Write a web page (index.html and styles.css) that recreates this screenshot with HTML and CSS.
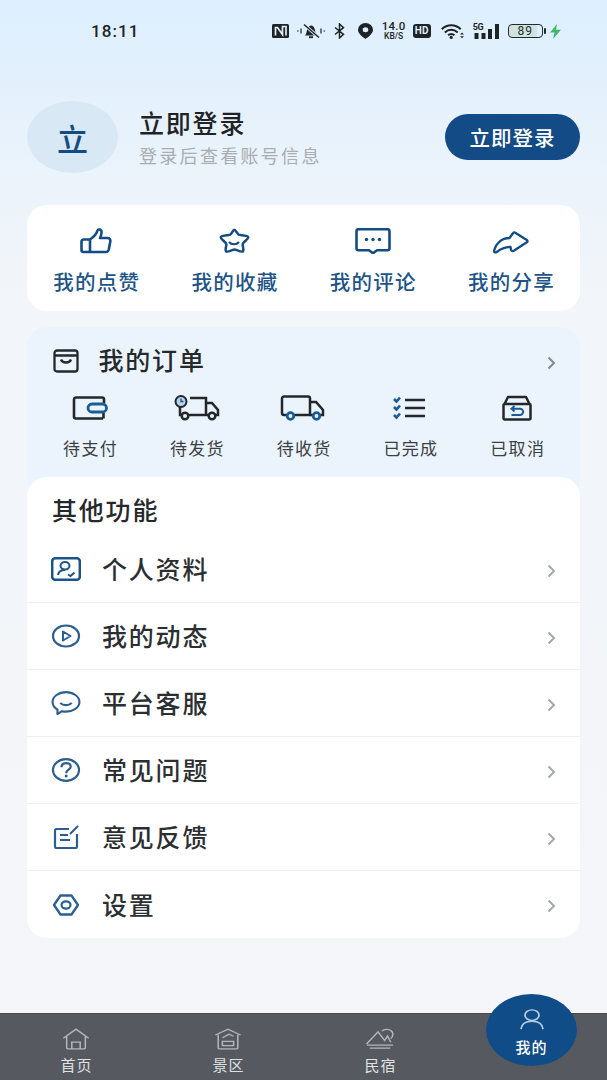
FILE: index.html
```html
<!DOCTYPE html>
<html lang="zh">
<head>
<meta charset="utf-8">
<title>我的</title>
<link rel="stylesheet" href="styles.css">
</head>
<body>
<div class="page">
  <header class="status">
    <span class="time">18:11</span>
    <div class="status-icons">
      <svg class="si nfc" viewBox="0 0 17 14"><rect width="17" height="14" rx="1.5" fill="#1f2326"/><path d="M3.500 11.500V3.500h2l5 7V2.500h3.500v9" fill="none" stroke="#dfeffc" stroke-width="1.700"/></svg>
      <svg class="si bell" viewBox="0 0 28 16"><path d="M8 12.500c1.500-1.500 1.500-3.500 2-5.500s2-4.500 4-4.500 3.500 2 4 4.500 .5 4 2 5.500z" fill="#1f2326"/><path d="M12 14.200h4" stroke="#1f2326" stroke-width="1.800"/><path d="M7 1.500l15 13" stroke="#dfeffc" stroke-width="3"/><path d="M7 1.500l15 13" stroke="#1f2326" stroke-width="1.500"/><path d="M0 8h1.500M4 5.500v5M24 5.500v5M26.500 8H28" stroke="#1f2326" stroke-width="1.200"/></svg>
      <svg class="si bt" viewBox="0 0 11 16"><path d="M1 4.500l8.500 6.800-4 3.700V1l4 3.700L1 11.500" fill="none" stroke="#1f2326" stroke-width="1.500"/></svg>
      <svg class="si pin" viewBox="0 0 15 16"><path fill-rule="evenodd" d="M7.500 0a7.500 6.800 0 0 1 7.500 6.800c0 4-4.500 7-7.500 9.200C4.500 13.800 0 10.800 0 6.800A7.500 6.800 0 0 1 7.500 0zm0 4.200a2.800 2.500 0 1 0 0 5 2.800 2.500 0 0 0 0-5z" fill="#1f2326"/></svg>
      <div class="speed"><span class="speed-num">14.0</span><span class="speed-unit">KB/S</span></div>
      <span class="hd">HD</span>
      <svg class="si wifi" viewBox="0 0 23 15"><path d="M.8 5.200c5.500-5.200 13.400-5.200 18.900 0M3.800 8.400c3.800-3.500 9-3.500 12.900 0M7 11.300c2-1.700 4.500-1.700 6.500 0" fill="none" stroke="#1f2326" stroke-width="2"/><circle cx="10.200" cy="13.400" r="1.600" fill="#1f2326"/><path d="M19 10.500h4l-2-2zM19 12.300h4l-2 2z" fill="#1f2326"/></svg>
      <div class="signal"><span class="five-g">5G</span>
        <svg class="si bars" viewBox="0 0 26 15"><path d="M1.500 9h4v6h-4zM8.500 9h4v6h-4z" fill="#1f2326"/><path d="M15 5h4v10h-4zM22 0h4v15h-4z" fill="#1f2326"/></svg>
      </div>
      <div class="battery"><span class="batt-level">89</span></div>
      <svg class="si bolt" viewBox="0 0 11 15"><path d="M7 0L0 8.500h4.500L3 15l8-9.200H6z" fill="#43b868"/></svg>
    </div>
  </header>

  <section class="profile">
    <div class="avatar">立</div>
    <div class="who">
      <div class="who-name">立即登录</div>
      <div class="who-sub">登录后查看账号信息</div>
    </div>
    <button class="login">立即登录</button>
  </section>

  <section class="card quick">
    <div class="quick-item">
      <svg class="qi" viewBox="0 0 32 26"><path d="M10 11.500v12.500H3.500a2 2 0 0 1-2-2v-8.500a2 2 0 0 1 2-2zM10 11.500c3-2 6.500-5 7.500-9 .4-1.500 3.800-1.500 4 1 .2 2-.5 4.500-1.500 6.500h7.500c2 0 3.200 1.500 2.800 3.500l-1.500 8c-.4 1.600-1.500 2.500-3 2.500H10" fill="none" stroke="#134c82" stroke-width="2.600" stroke-linejoin="round"/></svg>
      <span>我的点赞</span>
    </div>
    <div class="quick-item">
      <svg class="qi" viewBox="0 0 32 26"><path d="M16 1.800c1.800 0 3.200 4 4.700 4.800 1.500.7 8.800.6 9.500 2.500.5 1.700-5 5-5.500 6.700-.5 1.500 1.600 6 .3 7.500-1.500 1.300-6.800-1.800-8.500-1.800s-7 3.100-8.500 1.800c-1.300-1.500.8-6 .3-7.500-.5-1.700-6-5-5.500-6.700.7-1.900 8-1.800 9.500-2.500 1.500-.8 2.900-4.800 3.700-4.800z" fill="none" stroke="#134c82" stroke-width="2.500" stroke-linejoin="round"/><path d="M11 14c2.500 3 7.500 3 10 0" fill="none" stroke="#134c82" stroke-width="2.200"/></svg>
      <span>我的收藏</span>
    </div>
    <div class="quick-item">
      <svg class="qi" viewBox="0 0 36 26"><path d="M3.500 1.200h29a2 2 0 0 1 2 2v17a2 2 0 0 1-2 2H22L18 25.200 14 22.200H3.500a2 2 0 0 1-2-2v-17a2 2 0 0 1 2-2z" fill="none" stroke="#134c82" stroke-width="2.600" stroke-linejoin="round"/><circle cx="11.500" cy="11.500" r="1.700" fill="#134c82"/><circle cx="18" cy="11.500" r="1.700" fill="#134c82"/><circle cx="24.500" cy="11.500" r="1.700" fill="#134c82"/></svg>
      <span>我的评论</span>
    </div>
    <div class="quick-item">
      <svg class="qi" viewBox="0 0 36 26"><path d="M20 5.200c.6-.9 1.500-1 2.300-.5l11.500 7.300c1 .7 1 1.600 0 2.300l-13 8.500c-1.200.7-2.500.2-2.800-1l-.5-3c-5.500.2-9.500 1.800-13.500 5-1.800 1.300-3.500.5-2.800-1.700C3 15.500 8.500 10 16.500 10z" fill="none" stroke="#134c82" stroke-width="2.300" stroke-linejoin="round"/></svg>
      <span>我的分享</span>
    </div>
  </section>

  <section class="orders">
    <div class="orders-head">
      <svg class="bag" viewBox="0 0 26 24"><path d="M4 1.500h18a2.500 2.500 0 0 1 2.500 2.500v16a2.500 2.500 0 0 1-2.500 2.500H4A2.500 2.500 0 0 1 1.500 20V4A2.500 2.500 0 0 1 4 1.500zM1.500 6.500h23M8 10.500c1.500 4 8.500 4 10 0" fill="none" stroke="#26292c" stroke-width="2.300"/></svg>
      <span class="orders-title">我的订单</span>
      <svg class="chev" viewBox="0 0 9 14"><path d="M1.500 1.500L7 7l-5.500 5.500" fill="none" stroke="#83888d" stroke-width="2"/></svg>
    </div>
    <div class="orders-grid">
      <div class="order-item">
        <svg class="oi" viewBox="0 0 36 24"><path d="M31 22.500H4a2 2 0 0 1-2-2V3.500a2 2 0 0 1 2-2h26a2 2 0 0 1 2 2v4" fill="none" stroke="#24272a" stroke-width="2.600"/><path d="M31.500 17v5.500" stroke="#24272a" stroke-width="2.600"/><rect x="16" y="8" width="18.500" height="8" rx="4" fill="none" stroke="#1b5c98" stroke-width="2.800"/></svg>
        <span>待支付</span>
      </div>
      <div class="order-item">
        <svg class="oi wide" viewBox="0 0 46 26"><path d="M16 3h16v17H14M6 12v8h2M32 8h6l6 7v5h-3M32 20h3" fill="none" stroke="#24272a" stroke-width="2.500"/><circle cx="11" cy="21" r="3.300" fill="none" stroke="#24272a" stroke-width="2.500"/><circle cx="38" cy="21" r="3.300" fill="none" stroke="#24272a" stroke-width="2.500"/><circle cx="7" cy="6.500" r="5.500" fill="#b8d2ea" stroke="#24272a" stroke-width="2"/><path d="M7 3.500v3h2.500" fill="none" stroke="#1b5c98" stroke-width="1.400"/></svg>
        <span>待发货</span>
      </div>
      <div class="order-item">
        <svg class="oi wide" viewBox="0 0 46 26"><path d="M7 20H4a2 2 0 0 1-2-2V3.500a2 2 0 0 1 2-2h24a2 2 0 0 1 2 2V20H14" fill="none" stroke="#24272a" stroke-width="2.500"/><path d="M30 7h6l7 8v5h-3M30 20h3" fill="none" stroke="#24272a" stroke-width="2.500"/><circle cx="10.500" cy="21" r="3.300" fill="none" stroke="#1b5c98" stroke-width="2.800"/><circle cx="36.500" cy="21" r="3.300" fill="none" stroke="#1b5c98" stroke-width="2.800"/></svg>
        <span>待收货</span>
      </div>
      <div class="order-item">
        <svg class="oi" viewBox="0 0 36 24"><path d="M2 3l2.500 2.500L8 1.500M2 11l2.500 2.500L8 9.500M2 19l2.500 2.500L8 17.500" fill="none" stroke="#1b5c98" stroke-width="2.600"/><path d="M13 4h20M13 12h20M13 20h20" fill="none" stroke="#24272a" stroke-width="2.500"/></svg>
        <span>已完成</span>
      </div>
      <div class="order-item">
        <svg class="oi narrow" viewBox="0 0 30 26"><path d="M2.500 9L6 2h18l3.500 7M2.500 9h25a1 1 0 0 1 1 1v13a1.500 1.500 0 0 1-1.500 1.500H3A1.500 1.500 0 0 1 1.500 23V10a1 1 0 0 1 1-1z" fill="none" stroke="#24272a" stroke-width="2.500" stroke-linejoin="round"/><path d="M12.500 11l-3 2.700 3 2.700M10 13.700h8a3 3 0 0 1 0 6.300H9.500" fill="none" stroke="#1b5c98" stroke-width="2"/></svg>
        <span>已取消</span>
      </div>
    </div>
  </section>

  <section class="others">
    <h2 class="others-title">其他功能</h2>
    <div class="row">
      <svg class="ri" viewBox="0 0 30 24"><rect x="1.200" y="1.200" width="27.600" height="21.600" rx="3" fill="none" stroke="#1d5486" stroke-width="2.500"/><ellipse cx="14" cy="8.800" rx="4.500" ry="3.700" fill="none" stroke="#1d5486" stroke-width="2"/><path d="M7 18c.5-3.500 3-5 7-5M17 17.500l2.500 1.500 4-3.500" fill="none" stroke="#1d5486" stroke-width="2"/></svg>
      <span class="row-text">个人资料</span>
      <svg class="chev" viewBox="0 0 9 14"><path d="M1.500 1.500L7 7l-5.500 5.500" fill="none" stroke="#a4a8ac" stroke-width="2"/></svg>
    </div>
    <div class="row">
      <svg class="ri" viewBox="0 0 30 24"><ellipse cx="15" cy="12" rx="13" ry="10.500" fill="none" stroke="#2b5f8f" stroke-width="2.200"/><path d="M12 7.500l7.500 4.500-7.500 4.500z" fill="none" stroke="#2b5f8f" stroke-width="2" stroke-linejoin="round"/></svg>
      <span class="row-text">我的动态</span>
      <svg class="chev" viewBox="0 0 9 14"><path d="M1.500 1.500L7 7l-5.500 5.500" fill="none" stroke="#a4a8ac" stroke-width="2"/></svg>
    </div>
    <div class="row">
      <svg class="ri" viewBox="0 0 30 25"><path d="M15 1.200c7.500 0 14 4.500 14 10.300S22.500 21.500 15 21.500c-1.500 0-3-.2-4.200-.5L6 24l.2-4.500C3 17.500 1 14.800 1 11.500 1 5.700 7.500 1.200 15 1.200z" fill="none" stroke="#2b5f8f" stroke-width="2.200" stroke-linejoin="round"/><path d="M9 12.500c3 3 9 3 12 0" fill="none" stroke="#2b5f8f" stroke-width="2.200"/></svg>
      <span class="row-text">平台客服</span>
      <svg class="chev" viewBox="0 0 9 14"><path d="M1.500 1.500L7 7l-5.500 5.500" fill="none" stroke="#a4a8ac" stroke-width="2"/></svg>
    </div>
    <div class="row">
      <svg class="ri" viewBox="0 0 30 24"><ellipse cx="15" cy="12" rx="13" ry="10.800" fill="none" stroke="#2b5f8f" stroke-width="2.200"/><path d="M10.500 9.200c0-2.500 2-4 4.700-4s4.500 1.500 4.500 3.500c0 3-4.500 3-4.500 6.500" fill="none" stroke="#2b5f8f" stroke-width="2.200"/><circle cx="15.200" cy="18" r="1.500" fill="#2b5f8f"/></svg>
      <span class="row-text">常见问题</span>
      <svg class="chev" viewBox="0 0 9 14"><path d="M1.500 1.500L7 7l-5.500 5.500" fill="none" stroke="#a4a8ac" stroke-width="2"/></svg>
    </div>
    <div class="row">
      <svg class="ri" viewBox="0 0 30 24"><path d="M18 4H5.500a1.500 1.500 0 0 0-1.500 1.500v16a1.500 1.500 0 0 0 1.500 1.500h19a1.500 1.500 0 0 0 1.500-1.500V9" fill="none" stroke="#2b5f8f" stroke-width="2.200"/><path d="M9 10h8M9 15h10M19 9l8-8" fill="none" stroke="#2b5f8f" stroke-width="2.100"/></svg>
      <span class="row-text">意见反馈</span>
      <svg class="chev" viewBox="0 0 9 14"><path d="M1.500 1.500L7 7l-5.500 5.500" fill="none" stroke="#a4a8ac" stroke-width="2"/></svg>
    </div>
    <div class="row">
      <svg class="ri" viewBox="0 0 30 24"><path d="M9.500 2.500h11l6.500 9.500-6.500 9.500h-11L3 12z" fill="none" stroke="#2b5f8f" stroke-width="2.300" stroke-linejoin="round"/><ellipse cx="15" cy="12" rx="4.500" ry="3.600" fill="none" stroke="#2b5f8f" stroke-width="2.200"/></svg>
      <span class="row-text">设置</span>
      <svg class="chev" viewBox="0 0 9 14"><path d="M1.500 1.500L7 7l-5.500 5.500" fill="none" stroke="#a4a8ac" stroke-width="2"/></svg>
    </div>
  </section>

  <nav class="tabbar">
    <div class="tab">
      <svg class="ti" viewBox="0 0 30 28" preserveAspectRatio="none"><path d="M1.500 13L15 1.500 28.500 13M5 10.500V25a1.500 1.500 0 0 0 1.500 1.500h17A1.500 1.500 0 0 0 25 25V10.500M10.500 26.500V18h9v8.500" fill="none" stroke="#b4b7ba" stroke-width="1.600"/></svg>
      <span>首页</span>
    </div>
    <div class="tab">
      <svg class="ti" viewBox="0 0 30 28" preserveAspectRatio="none"><path d="M1.500 9L15 1.500 28.500 9M4.500 8.500V25a1.500 1.500 0 0 0 1.500 1.500h18a1.500 1.500 0 0 0 1.500-1.500V8.500M9 17h12v5.500H9zM9 12.500L16 8l5 2.500" fill="none" stroke="#b4b7ba" stroke-width="1.600"/></svg>
      <span>景区</span>
    </div>
    <div class="tab">
      <svg class="ti" viewBox="0 0 30 28" preserveAspectRatio="none"><path d="M.5 20.400L12.900 5 20 16l3-6 3.500 8M17 4c2.500-2.800 7-3 10-.5 2.500 2.500 2.500 7-.5 10M1 21.800h28M4 25.700h22" fill="none" stroke="#b4b7ba" stroke-width="1.600"/></svg>
      <span>民宿</span>
    </div>
    <div class="tab-spacer"></div>
    <div class="tab-active">
      <svg class="ta" viewBox="0 0 24 24" preserveAspectRatio="none"><ellipse cx="12" cy="7" rx="7" ry="6" fill="none" stroke="#b9cfe3" stroke-width="1.700"/><path d="M1 23c.5-6 5-9 11-9s10.500 3 11 9" fill="none" stroke="#b9cfe3" stroke-width="1.700"/></svg>
      <span>我的</span>
    </div>
  </nav>
</div>
</body>
</html>
```

FILE: styles.css
```css
* { box-sizing: border-box; }
html, body { margin: 0; padding: 0; }
body {
  font-family: "Noto Sans CJK SC", "Noto Sans", sans-serif;
  color: #26292c;
}
.page {
  width: 607px;
  height: 1080px;
  overflow: hidden;
  display: flex;
  flex-direction: column;
  position: relative;
  background: linear-gradient(180deg, #ddeffe 0, #e1f0fd 60px, #ebf3fb 170px, #f2f5f9 300px, #f4f6f9 100%);
}

/* status bar */
.status {
  height: 62px;
  display: flex;
  align-items: center;
  padding-left: 91px;
  flex: none;
}
.time {
  font-family: Roboto, sans-serif;
  font-size: 17px;
  font-weight: 500;
  letter-spacing: 1.100px;
  color: #1f2326;
}
.status-icons {
  margin-left: 132px;
  display: flex;
  align-items: center;
  height: 18px;
  color: #1f2326;
}
.si { display: block; flex: none; }
.nfc { width: 17px; height: 14px; margin-right: 8px; }
.bell { width: 28px; height: 16px; margin-right: 9px; }
.bt { width: 11px; height: 16px; margin-right: 13px; }
.pin { width: 15px; height: 16px; margin-right: 8px; }
.speed {
  width: 26px;
  margin-right: 6px;
  display: flex;
  flex-direction: column;
  align-items: center;
  font-family: Roboto, sans-serif;
  font-weight: 500;
  line-height: 1;
}
.speed-num { font-size: 11.500px; line-height: 9px; letter-spacing: .3px; }
.speed-unit { font-size: 8.500px; line-height: 8px; margin-top: 1.500px; }
.hd {
  width: 18px;
  height: 14px;
  margin-right: 10px;
  border-radius: 3px;
  background: #1f2326;
  color: #dfeffc;
  font-family: Roboto, sans-serif;
  font-size: 10px;
  font-weight: 700;
  line-height: 14px;
  text-align: center;
}
.wifi { width: 23px; height: 15px; margin-right: 9px; }
.signal { width: 26px; height: 15px; margin-right: 9px; position: relative; }
.five-g {
  position: absolute;
  left: 0;
  top: -1px;
  font-family: Roboto, sans-serif;
  font-size: 9px;
  font-weight: 700;
  line-height: 9px;
  letter-spacing: -.2px;
}
.bars { width: 26px; height: 15px; }
.battery {
  width: 35px;
  height: 14px;
  margin-right: 7px;
  border: 1px solid #26292c;
  border-radius: 4px;
  position: relative;
  background: linear-gradient(90deg, #cfe3e0 0, #cfe3e0 85%, transparent 85%);
}
.battery::after {
  content: "";
  position: absolute;
  right: -4px;
  top: 3px;
  width: 2px;
  height: 6px;
  border-radius: 1px;
  background: #26292c;
}
.batt-level {
  display: block;
  font-family: Roboto, sans-serif;
  font-size: 12px;
  line-height: 12px;
  text-align: center;
  letter-spacing: .8px;
  color: #2a2e30;
}
.bolt { width: 11px; height: 15px; }

/* profile */
.profile {
  height: 72px;
  margin: 39px 27px 0;
  display: flex;
  align-items: center;
  flex: none;
}
.avatar {
  width: 91px;
  height: 72px;
  border-radius: 50%;
  background: #d9e8f5;
  color: #134c82;
  font-size: 31px;
  font-weight: 500;
  display: flex;
  align-items: center;
  justify-content: center;
}
.who { margin-left: 21px; flex: 1; }
.who-name {
  font-size: 25px;
  font-weight: 500;
  line-height: 30px;
  letter-spacing: 1.800px;
  color: #1f2326;
  margin-top: -1px;
}
.who-sub {
  margin-top: 6px;
  font-size: 18px;
  line-height: 24px;
  letter-spacing: 2.300px;
  color: #a9adb1;
}
.login {
  width: 135px;
  height: 46px;
  border: 0;
  border-radius: 23px;
  background: #124b85;
  color: #fff;
  font-family: inherit;
  font-size: 20.500px;
  font-weight: 500;
  letter-spacing: 1px;
  padding: 0;
}

/* cards */
.card, .others, .orders { margin-left: 27px; margin-right: 27px; flex: none; }
.quick {
  margin-top: 32px;
  height: 106px;
  background: #fff;
  border-radius: 20px;
  display: grid;
  grid-template-columns: repeat(4, 1fr);
}
.quick-item {
  display: flex;
  flex-direction: column;
  align-items: center;
  padding-top: 23px;
  font-size: 20.500px;
  font-weight: 500;
  line-height: 26px;
  letter-spacing: 1.200px;
  color: #1e5487;
}
.quick-item span { margin-right: -1.200px; }
.qi { width: 36px; height: 26px; margin-bottom: 14px; }

.orders {
  margin-top: 16px;
  height: 170px;
  padding: 0 9.500px;
  background: #ebf4fd;
  border-radius: 20px;
}
.orders-head {
  height: 64px;
  display: flex;
  align-items: center;
  padding: 4px 14.500px 0 16px;
}
.bag { width: 26px; height: 24px; flex: none; margin-top: -1px; }
.orders-title {
  margin-left: 20px;
  flex: 1;
  font-size: 25px;
  font-weight: 500;
  line-height: 32px;
  letter-spacing: 1.800px;
  margin-top: -4px;
}
.chev { width: 9px; height: 14px; flex: none; margin-top: 3px; }
.orders-grid {
  display: grid;
  grid-template-columns: repeat(5, 1fr);
}
.order-item {
  display: flex;
  flex-direction: column;
  align-items: center;
  font-size: 17px;
  line-height: 22px;
  letter-spacing: 1.300px;
  color: #3b3f43;
}
.order-item span { margin-right: -1.300px; }
.oi { width: 36px; height: 26px; margin-top: 4px; margin-bottom: 16px; }
.oi.wide { width: 46px; }
.oi.narrow { width: 30px; }

.others {
  margin-top: -20px;
  height: 461px;
  background: #fff;
  border-radius: 20px;
  position: relative;
  padding-top: 59px;
}
.others-title {
  position: absolute;
  left: 25px;
  top: 16px;
  margin: 0;
  font-size: 25px;
  font-weight: 500;
  line-height: 32px;
  letter-spacing: 1.800px;
  color: #26292c;
}
.row {
  height: 67px;
  padding: 0 24px 0 24px;
  display: flex;
  align-items: center;
  border-bottom: 1px solid #f0f1f3;
}
.row:last-child { border-bottom: 0; }
.ri { width: 30px; height: 24px; flex: none; }
.row-text {
  margin-left: 21px;
  margin-top: -2px;
  flex: 1;
  font-size: 25px;
  font-weight: 500;
  line-height: 32px;
  letter-spacing: 1.800px;
  color: #2c2f32;
}

/* tab bar */
.tabbar {
  margin-top: auto;
  height: 67px;
  flex: none;
  background: #565a60;
  border-top: 1px solid #46494e;
  display: grid;
  grid-template-columns: repeat(4, 152px);
  position: relative;
}
.tab {
  display: flex;
  flex-direction: column;
  align-items: center;
  padding-top: 14px;
  font-size: 15px;
  line-height: 20px;
  letter-spacing: 1px;
  color: #dfe1e3;
}
.tab span { margin-right: -1px; }
.ti { width: 28px; height: 22px; margin-bottom: 5px; }
.tab-active {
  position: absolute;
  left: 486px;
  top: -20px;
  width: 91px;
  height: 72px;
  border-radius: 50%;
  background: #0f4c88;
  display: flex;
  flex-direction: column;
  align-items: center;
  padding-top: 15px;
  color: #fff;
  font-size: 15px;
  font-weight: 500;
  line-height: 20px;
  letter-spacing: 1px;
}
.ta { width: 24px; height: 21px; margin-bottom: 7px; }
```
